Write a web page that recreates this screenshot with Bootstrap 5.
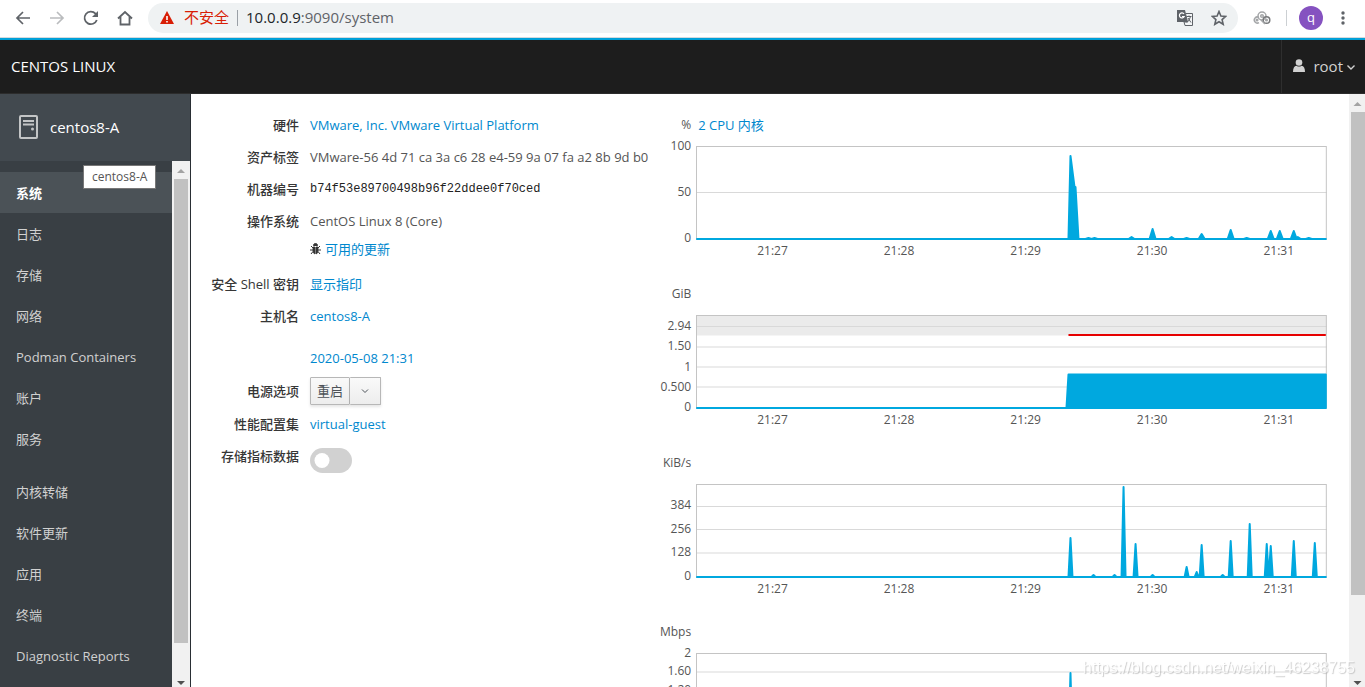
<!DOCTYPE html>
<html lang="zh-CN">
<head>
<meta charset="utf-8">
<meta name="viewport" content="width=device-width, initial-scale=1">
<title>系统 - centos8-A</title>
<link href="https://cdn.jsdelivr.net/npm/bootstrap@5.3.0/dist/css/bootstrap.min.css" rel="stylesheet">
<style>
body{font-family:"Open Sans","Noto Sans CJK SC",sans-serif;font-size:13px;line-height:16px;color:#555;background:#fff}
a{color:#0088ce;text-decoration:none}
svg{display:block}
/* browser toolbar */
.toolbar{height:38px;padding:0 10px 2px 11px;border-bottom:1px solid #d5dadd;color:#5f6368}
.navset{gap:10px;margin-right:11px}
.tool{width:24px;height:24px;padding:0;border:0;background:none;color:inherit;display:flex;align-items:center;justify-content:center}
.tool.ext{width:32px}
.omnibox{height:30px;border-radius:15px;background:#eff2f3;padding:0 7px 0 12px;font-size:15px}
.omnibox>span{padding-bottom:2px}
.omnibox .insecure{color:#d81e06;margin:0 8px 0 10px}
.omnibox>.vline,.vline{width:1px;height:16px;padding:0;background:#9aa0a6}
.vline.pale{background:#ccd0d3}
.avatar{width:24px;height:24px;border-radius:12px;background:#8552c0;color:#fff;border:0;padding:0 0 2px;font-size:13px;line-height:20px}
/* masthead */
.masthead{height:56px;border-top:2px solid #00a0d8;border-bottom:1px solid #2c2c2c;background:#1d1d1d;font-size:15px;color:#fff}
.brand{padding:0 0 2px 11px}
.usermenu{border:0;border-left:1px solid #2e2e2e;background:none;color:#d1d1d1;padding:0 10px 2px 11px}
.caret{margin-top:4px}
/* sidebar */
.side{width:191px;background:#393f44;border-right:1px solid #292e34}
.host{height:67px;background:#42494f;padding:0 0 1px 19px;font-size:15px;color:#fff;gap:12px}
.host a{color:#fff}
.menu{padding-top:11px}
.menu div{padding-top:12px}
.menu a{display:flex;align-items:center;height:41px;padding-left:16px;color:#d1d1d1}
.menu a.on{background:#4b5257;color:#fff;font-weight:700}
.tip{left:83px;top:165px;height:24px;background:#fff;border:1px solid #777;padding:3px 8px;font-size:12px;z-index:2}
.bar{width:16px;background:#f1f1f1}
.side .bar{width:18px}
.bar i{display:block;margin:0 2px;background:#c1c1c1}
.bar svg{height:18px;width:17px;flex:none}
/* details */
.facts{flex:0 0 40%;padding-top:15px}
.facts>div{display:flex;align-items:center;gap:11px;height:32px}
.facts dt{width:108px;text-align:right;color:#363636;font-weight:500;flex:none}
.facts dd{margin:0;white-space:nowrap}
.facts .tight{height:24px;margin-bottom:7px}
.facts .clock{margin-top:10px}
.facts .power{height:34px}
.machine{font-family:"Liberation Mono",monospace;font-size:12px;color:#222}
.pbtn{height:28px;border:1px solid #b7b7b7;border-radius:1px;background:linear-gradient(#fafafa,#ededed);color:#4d5258;font-size:13px;line-height:16px;padding:0 6px;box-shadow:0 2px 3px rgba(3,3,3,.1)}
.pbtn.drop{width:31px;padding:0 10px}
.form-check-input.onoff{width:42px;height:25px;margin:8px 0 0;border:0;background-color:#d1d1d1;border-radius:13px;background-size:25px;background-position:left center;background-image:url("data:image/svg+xml,%3csvg xmlns='http://www.w3.org/2000/svg' viewBox='0 0 25 25'%3e%3ccircle cx='12' cy='12.500' r='7.500' fill='%23fff'/%3e%3c/svg%3e")}
/* charts */
.charts{padding:17px 22px 0 0;font-size:12px}
.plot{display:grid;grid-template-columns:42px minmax(0,1fr);grid-template-rows:28px 94px 24px;height:169px}
.plot>*{min-width:0}
.unit,.ticks{text-align:right;padding-right:5px}
.unit,.name{line-height:28px}
.name{padding-left:2px;font-size:13px}
.ticks{display:flex;flex-direction:column;justify-content:space-between;height:108px;margin-top:-1px}
.ticks.mem{padding-top:11px}.ticks.disk{padding-top:21px}
.plot>svg{width:100%;height:94px;margin-top:7px}
.times{grid-column:2;display:flex;margin:10px -15px 0 13px}
.times span{flex:1;text-align:center}
.grid{fill:none;stroke:#d9d9d9;stroke-width:1}
.frame{fill:none;stroke:#c4c4c4;stroke-width:1}
.area{fill:#00a8df;stroke:#00a8df;stroke-width:2;stroke-linejoin:round}
.plot path{vector-effect:non-scaling-stroke}
.wmark{right:10px;bottom:9px;font:16px/20px "Liberation Sans",sans-serif;color:#fff;text-shadow:1px 1px 1px #aaa;opacity:.6}
</style>
</head>
<body class="vh-100 overflow-hidden d-flex flex-column">
<nav class="toolbar d-flex align-items-center flex-shrink-0" aria-label="浏览器">
  <div class="navset d-flex">
    <button class="tool" aria-label="后退"><svg width="16" height="16" fill="none" stroke="currentColor" stroke-width="1.700"><path d="M15 8H2M8 2 2 8l6 6"/></svg></button>
    <button class="tool" aria-label="前进"><svg width="16" height="16" fill="none" stroke="#babcbe" stroke-width="1.700"><path d="M1 8h13M8 2l6 6-6 6"/></svg></button>
    <button class="tool" aria-label="刷新"><svg width="16" height="16" fill="none" stroke="currentColor" stroke-width="1.800"><path d="M13.800 10A6.300 6.300 0 1 1 12.500 3.600L14 5.200"/><path d="M15 1v6H9z" fill="currentColor" stroke="none"/></svg></button>
    <button class="tool" aria-label="主页"><svg width="16" height="16" fill="none" stroke="currentColor" stroke-width="1.800"><path d="M1 8.500 8 2l7 6.500M3.500 7v7.500h9V7"/></svg></button>
  </div>
  <div class="omnibox flex-grow-1 d-flex align-items-center">
    <svg width="14" height="13"><path d="M7 0 14 13H0z" fill="#d81e06"/><path d="M7 5v4M7 10v1.500" stroke="#fff" stroke-width="1.600"/></svg>
    <span class="insecure">不安全</span><span class="vline me-2"></span>
    <span class="flex-grow-1"><span class="text-dark">10.0.0.9</span>:9090/system</span>
    <button class="tool" aria-label="翻译"><svg width="16" height="16"><path d="M0 0h8l3 12H0z" fill="#5f6368"/><path d="M8.500 3.500h7v12H8L7 12h3.500z" fill="#f4f6f7" stroke="#5f6368"/><path d="M7 4A2.500 2.500 0 1 0 7.200 6.500H5" fill="none" stroke="#fff" stroke-width="1.200"/><path d="M9.500 6.500h5M12 5.500v1M13.500 6.500q-1 4-3.500 6M11 8l3 4.500" fill="none" stroke="#5f6368"/></svg></button>
    <button class="tool" style="margin-left:10px" aria-label="收藏"><svg width="16" height="16" fill="none" stroke="#5f6368" stroke-width="1.600"><path d="M8 1.500 9.900 6l4.800.4-3.600 3.200 1.100 4.700L8 11.800l-4.200 2.500 1.100-4.700L1.300 6.400 6.100 6z"/></svg></button>
  </div>
  <button class="tool ext mx-2" aria-label="扩展"><svg width="18" height="14" fill="none" stroke="#a4a6a8" stroke-width="1.500"><circle cx="9" cy="5" r="4"/><circle cx="9" cy="5" r="1.300"/><path d="M6 6.500a3 3 0 1 0 0 5"/><circle cx="4" cy="9" r=".8"/><circle cx="13.500" cy="9" r="3.300" stroke="#77797b"/><circle cx="13.500" cy="9" r=".8"/><path d="M8 9l4 4"/></svg></button>
  <span class="vline pale me-2"></span>
  <button class="avatar ms-1 me-2">q</button>
  <button class="tool" aria-label="菜单"><svg width="4" height="14" fill="#5f6368"><circle cx="2" cy="2" r="1.700"/><circle cx="2" cy="7" r="1.700"/><circle cx="2" cy="12" r="1.700"/></svg></button>
</nav>
<header class="masthead d-flex justify-content-between flex-shrink-0">
  <span class="brand align-self-center">CENTOS LINUX</span>
  <button class="usermenu d-flex align-items-center">
    <svg width="12" height="13" fill="#d1d1d1"><circle cx="6" cy="3.500" r="3.300"/><path d="M0 13q0-6 3.500-6.300Q6 8.500 8.500 6.700 12 7 12 13z"/></svg>
    <span class="ms-2 me-1">root</span>
    <svg class="caret" width="8" height="5" fill="none" stroke="#d1d1d1" stroke-width="1.400"><path d="M.5.500 4 4 7.500.500"/></svg>
  </button>
</header>
<div class="d-flex flex-grow-1 overflow-hidden">
  <aside class="side d-flex flex-column flex-shrink-0">
    <div class="host d-flex align-items-center flex-shrink-0">
      <svg width="19" height="24" fill="none" stroke="#c3c5c6" stroke-width="2"><rect x="1" y="1" width="17" height="22" rx="1"/><path d="M4 6h11M4 9.500h11"/><circle cx="13.500" cy="14" r="1.500" fill="#c3c5c6" stroke="none"/></svg>
      <a href="#">centos8-A</a>
    </div>
    <div class="d-flex flex-grow-1 overflow-hidden">
      <nav class="menu flex-grow-1">
        <a href="#" class="on">系统</a><a href="#">日志</a><a href="#">存储</a><a href="#">网络</a><a href="#">Podman Containers</a><a href="#">账户</a><a href="#">服务</a>
        <div><a href="#">内核转储</a><a href="#">软件更新</a><a href="#">应用</a><a href="#">终端</a><a href="#">Diagnostic Reports</a></div>
      </nav>
      <div class="bar d-flex flex-column">
        <svg><path d="M5 12h8l-4-4z" fill="#a3a3a3"/></svg><i style="height:464px"></i>
        <svg class="mt-auto"><path d="M5 12h8l-4 4z" fill="#505050"/></svg>
      </div>
    </div>
  </aside>
  <div class="tip position-absolute">centos8-A</div>
  <main class="d-flex flex-grow-1 overflow-hidden">
    <dl class="facts m-0">
      <div><dt>硬件</dt><dd><a href="#">VMware, Inc. VMware Virtual Platform</a></dd></div>
      <div><dt>资产标签</dt><dd>VMware-56 4d 71 ca 3a c6 28 e4-59 9a 07 fa a2 8b 9d b0</dd></div>
      <div><dt>机器编号</dt><dd class="machine">b74f53e89700498b96f22ddee0f70ced</dd></div>
      <div><dt>操作系统</dt><dd>CentOS Linux 8 (Core)</dd></div>
      <div class="tight"><dt></dt><dd class="d-flex align-items-center gap-1"><svg width="11" height="12" fill="#363636" stroke="#363636"><path d="M3.500 2.500a2 2 0 0 1 4 0z"/><path d="M3 4h2v7Q3 10.500 3 8zM6 4h2v4q0 2.500-2 3z" stroke-width=".8"/><path d="M3 5 1 3M0 7h3M3 8.500 1 11M8 5l2-2M8 7h3M8 8.500 10 11" fill="none"/></svg><a href="#">可用的更新</a></dd></div>
      <div><dt>安全 Shell 密钥</dt><dd><a href="#">显示指印</a></dd></div>
      <div><dt>主机名</dt><dd><a href="#">centos8-A</a></dd></div>
      <div class="clock"><dt></dt><dd><a href="#">2020-05-08 21:31</a></dd></div>
      <div class="power"><dt>电源选项</dt><dd class="btn-group"><button class="pbtn">重启</button><button class="pbtn drop border-start-0" aria-label="更多"><svg class="mx-auto" width="8" height="5" fill="none" stroke="#4d5258"><path d="M1 .5 4 3.500 7 .5"/></svg></button></dd></div>
      <div><dt>性能配置集</dt><dd><a href="#">virtual-guest</a></dd></div>
      <div><dt><label for="pcp">存储指标数据</label></dt><dd class="form-check form-switch p-0"><input class="form-check-input onoff float-none d-block" type="checkbox" role="switch" id="pcp"></dd></div>
    </dl>
    <section class="charts flex-grow-1">
      <div class="plot"><div class="unit">%</div><div class="name"><a href="#">2 CPU 内核</a></div>
        <div class="ticks"><span>100</span><span>50</span><span>0</span></div>
        <svg viewBox="0 0 630 94" preserveAspectRatio="none"><path class="grid" d="M0 46.500h630M0 92.500h630"/><path class="frame" d="M.5 94V.5h629V94"/><path class="area" id="cpu" d=""/></svg>
        <div class="times"><span>21:27</span><span>21:28</span><span>21:29</span><span>21:30</span><span>21:31</span></div></div>
      <div class="plot"><div class="unit">GiB</div><div></div>
        <div class="ticks mem"><span>2.94</span><span>1.50</span><span>1</span><span>0.500</span><span>0</span></div>
        <svg viewBox="0 0 630 94" preserveAspectRatio="none"><path fill="#ebebeb" d="M0 0h630v20.500H0z"/><path class="grid" d="M0 11.500h630M0 32h630M0 52h630M0 72h630M0 93.500h630"/><path class="frame" d="M.5 94V.5h629V94"/><path class="area" d="M1 93H370L372 59.500H629V93z"/><path d="M372 20h257" stroke="#e60000" stroke-width="2"/></svg>
        <div class="times"><span>21:27</span><span>21:28</span><span>21:29</span><span>21:30</span><span>21:31</span></div></div>
      <div class="plot"><div class="unit">KiB/s</div><div></div>
        <div class="ticks disk"><span>384</span><span>256</span><span>128</span><span>0</span></div>
        <svg viewBox="0 0 630 94" preserveAspectRatio="none"><path class="grid" d="M0 22.500h630M0 45.500h630M0 69h630"/><path class="frame" d="M.5 94V.5h629V94"/><path class="area" id="disk" d=""/></svg>
        <div class="times"><span>21:27</span><span>21:28</span><span>21:29</span><span>21:30</span><span>21:31</span></div></div>
      <div class="plot"><div class="unit">Mbps</div><div></div>
        <div class="ticks"><span>2</span><span>1.60</span><span>1.20</span><span>0.800</span><span>0.400</span><span>0</span></div>
        <svg viewBox="0 0 630 94" preserveAspectRatio="none"><path class="grid" d="M0 19h630M0 37.500h630M0 56h630M0 74h630"/><path class="frame" d="M.5 94V.5h629V94"/><path class="area" id="net" d=""/></svg>
        <div class="times"><span>21:27</span><span>21:28</span><span>21:29</span><span>21:30</span><span>21:31</span></div></div>
    </section>
  </main>
  <div class="bar d-flex flex-column flex-shrink-0">
    <svg><path d="M4.500 12h8l-4-4z" fill="#a3a3a3"/></svg><i class="me-0" style="height:483px"></i>
    <svg class="mt-auto"><path d="M4.500 12h8l-4 4z" fill="#505050"/></svg>
  </div>
</div>
<div class="wmark position-fixed">https://blog.csdn.net/weixin_46238755</div>
<script src="https://cdn.jsdelivr.net/npm/bootstrap@5.3.0/dist/js/bootstrap.bundle.min.js"></script>
<script>
// Each sample is [x, height]; a sample rises from and returns to the zero line.
function spikes(samples, half) {
  return 'M1 93' + samples.map(([x, h]) => `L${x - half} 93L${x} ${93 - h}L${x + half} 93`).join('') + 'L629 93z';
}
const cpu = [[392,1],[398,1],[435,2],[456,10],[475,2],[490,1],[505,5],[534,9],[550,1],[574,8],[583,8],[597,8],[601,2],[612,1]];
document.getElementById('cpu').setAttribute('d', 'M1 93H372L374 10L378 41L379 41L382 93' + spikes(cpu, 3).slice(5));
document.getElementById('disk').setAttribute('d', spikes([[374,39],[397,2],[418,2],[427,90],[439,33],[456,2],[490,10],[500,5],[505,32],[526,2],[534,36],[553,53],[570,33],[574,31],[597,36],[618,34]], 2));
document.getElementById('net').setAttribute('d', spikes([[374,73]], 2));
</script>
</body>
</html>
